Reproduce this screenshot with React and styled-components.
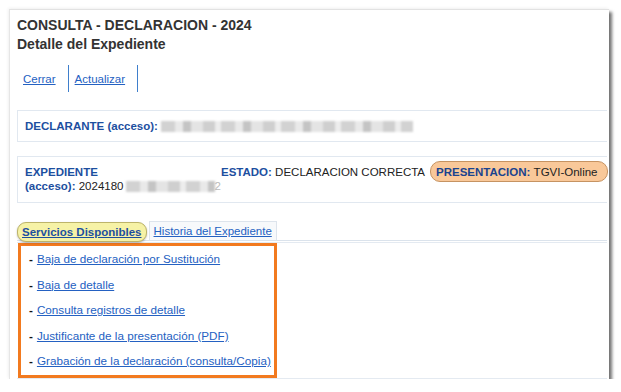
import React from 'react';
import styled, { createGlobalStyle } from 'styled-components';

const GlobalStyle = createGlobalStyle`
  body {
    margin: 0;
    background: #fff;
    font-family: 'Liberation Sans', Arial, sans-serif;
  }
`;

const Page = styled.div`
  padding: 9px 0 0 9px;
`;

const Card = styled.div`
  width: 600px;
  height: 370px;
  box-sizing: border-box;
  background: #fff;
  border-top: 1px solid #e2e2e2;
  border-left: 1px solid #e6e6e6;
  box-shadow: 3px 3px 3px rgba(0, 0, 0, 0.55), -1px -1px 3px rgba(0, 0, 0, 0.06);
  padding: 6px 0 0 7px;
  overflow: hidden;
`;

const Title = styled.h1`
  margin: 0;
  font-size: 14px;
  line-height: 19px;
  font-weight: bold;
  color: #333;
`;

const Toolbar = styled.div`
  display: flex;
  margin-top: 11px;
  height: 27px;
`;

const ToolLink = styled.a`
  display: flex;
  align-items: center;
  padding: 0 12px 0 6px;
  border-right: 1px solid #3f7fcc;
  font-size: 11.5px;
  color: #2461c2;
  text-decoration: underline;
  cursor: pointer;
`;

const InfoBox = styled.div`
  margin-top: ${(p) => p.$top}px;
  margin-right: 2px;
  height: ${(p) => p.$height}px;
  box-sizing: border-box;
  border: 1px solid #e1e8f0;
  border-right: none;
  padding: ${(p) => p.$pad};
  font-size: 11.5px;
  color: #222;
`;

const Label = styled.b`
  color: #1d4f9f;
`;

const Line = styled.div`
  display: flex;
  align-items: center;
  line-height: 14px;
  white-space: nowrap;
`;

const Redacted = styled.span`
  display: inline-block;
  width: ${(p) => p.$w}px;
  height: 11px;
  margin-left: 3px;
  background-color: #dedede;
  background-image: repeating-linear-gradient(
    90deg,
    #d2d2d2 0 14px,
    #e9e9e9 14px 22px,
    #c4c4c4 22px 30px,
    #e4e4e4 30px 42px,
    #cfcfcf 42px 54px,
    #ededed 54px 60px
  );
  filter: blur(1.3px);
`;

const ExpRow = styled.div`
  display: grid;
  grid-template-columns: 196px auto auto;
  align-items: start;
`;

const Estado = styled.div`
  line-height: 14px;
  white-space: nowrap;
`;

const Pill = styled.div`
  margin: -4px 0 0 5px;
  height: 21px;
  box-sizing: border-box;
  padding: 0 9px 0 5px;
  display: flex;
  align-items: center;
  background: #f9c899;
  border: 1px solid #c69362;
  border-radius: 10px;
  white-space: nowrap;
  font-size: 11.5px;
  color: #222;

  b {
    color: #1a438f;
  }
`;

const TabBar = styled.div`
  display: flex;
  align-items: flex-end;
  gap: 2px;
  margin-top: 18px;
  border-bottom: 1px solid #dbe3ec;
  margin-right: 2px;
`;

const Tab = styled.a`
  display: flex;
  align-items: center;
  height: ${(p) => (p.$active ? 20 : 19)}px;
  box-sizing: border-box;
  padding: 0 4px;
  margin-bottom: ${(p) => (p.$active ? -2 : 0)}px;
  font-size: 11.5px;
  font-weight: ${(p) => (p.$active ? 'bold' : 'normal')};
  color: ${(p) => (p.$active ? '#1d4f9f' : '#2461c2')};
  text-decoration: underline;
  background: ${(p) => (p.$active ? '#f6f2a6' : '#f7f9fb')};
  border: 1px solid ${(p) => (p.$active ? '#bdb46a' : '#dde4ec')};
  border-bottom: ${(p) => (p.$active ? '1px solid #bdb46a' : 'none')};
  border-radius: ${(p) => (p.$active ? '9px' : '0')};
  box-shadow: ${(p) => (p.$active ? '0 1px 2px rgba(0,0,0,0.25)' : 'none')};
  cursor: pointer;
`;

const Panel = styled.div`
  margin-top: 1px;
  margin-right: 2px;
  border-top: 1px solid #e4eaf1;
  border-bottom: 1px solid #e4eaf1;
`;

const ServiceList = styled.ul`
  width: 259px;
  box-sizing: border-box;
  margin: 0 0 0 1px;
  padding: 0 0 1px 8px;
  border: 3px solid #f27a1f;
  list-style: none;
`;

const ServiceItem = styled.li`
  height: 25.5px;
  display: flex;
  align-items: center;
  font-size: 11.7px;
  color: #111;
  white-space: nowrap;

  b {
    margin-right: 4px;
  }
`;

const ServiceLink = styled.a`
  color: #2461c2;
  text-decoration: underline;
  cursor: pointer;
`;

const services = [
  'Baja de declaración por Sustitución',
  'Baja de detalle',
  'Consulta registros de detalle',
  'Justificante de la presentación (PDF)',
  'Grabación de la declaración (consulta/Copia)',
];

export default function App() {
  return (
    <Page>
      <GlobalStyle />
      <Card>
        <Title>
          CONSULTA - DECLARACION - 2024
          <br />
          Detalle del Expediente
        </Title>

        <Toolbar>
          <ToolLink>Cerrar</ToolLink>
          <ToolLink>Actualizar</ToolLink>
        </Toolbar>

        <InfoBox $top={18} $height={32} $pad="8px 7px">
          <Line>
            <Label>DECLARANTE (acceso):</Label>
            <Redacted $w={252} />
          </Line>
        </InfoBox>

        <InfoBox $top={14} $height={47} $pad="8px 7px">
          <ExpRow>
            <div>
              <Line>
                <Label>EXPEDIENTE</Label>
              </Line>
              <Line>
                <Label>(acceso):</Label>&nbsp;2024180
                <Redacted $w={92} />
                <span style={{ color: '#bbb' }}>2</span>
              </Line>
            </div>
            <Estado>
              <Label>ESTADO:</Label> DECLARACION CORRECTA
            </Estado>
            <Pill>
              <b>PRESENTACION:</b>&nbsp;TGVI-Online
            </Pill>
          </ExpRow>
        </InfoBox>

        <TabBar>
          <Tab $active>Servicios Disponibles</Tab>
          <Tab>Historia del Expediente</Tab>
        </TabBar>

        <Panel>
          <ServiceList>
            {services.map((s) => (
              <ServiceItem key={s}>
                <b>-</b>
                <ServiceLink>{s}</ServiceLink>
              </ServiceItem>
            ))}
          </ServiceList>
        </Panel>
      </Card>
    </Page>
  );
}
